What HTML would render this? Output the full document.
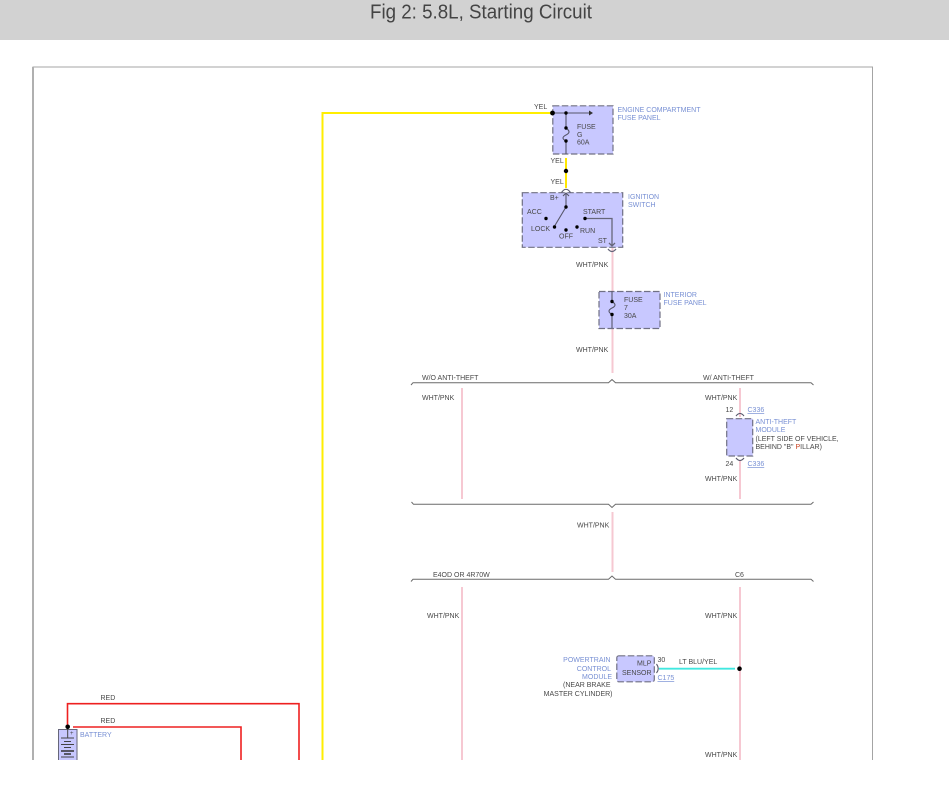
<!DOCTYPE html>
<html><head><meta charset="utf-8"><style>
html,body{margin:0;padding:0;background:#fff;width:949px;height:790px;overflow:hidden}
svg{display:block}
text{font-family:"Liberation Sans",Arial,sans-serif;font-size:7px;fill:#484848}
.b{fill:#7890d4}
.box{fill:#c8c8ff;stroke:#707084;stroke-width:1.2;stroke-dasharray:6.5 2.5}
.w{fill:none;stroke:#56566a;stroke-width:1.1}
.br{fill:none;stroke:#6a6a6a;stroke-width:1}
.p{stroke:#f6c8d2;stroke-width:2;fill:none}
.y{stroke:#ffe800;stroke-width:2;fill:none}
.r{stroke:#ee2020;stroke-width:1.6;fill:none}
</style></head><body>
<svg width="949" height="790" viewBox="0 0 949 790" xmlns="http://www.w3.org/2000/svg">
<rect width="949" height="40" fill="#d2d2d2"/>
<text x="370" y="18.500" style="font-size:20px;fill:#444" textLength="222" lengthAdjust="spacingAndGlyphs">Fig 2: 5.8L, Starting Circuit</text>
<path d="M33 760V67H872.500V760" fill="none" stroke="#a4a4a4" stroke-width="1"/>
<path d="M33 67V760" fill="none" stroke="#b0b0b0" stroke-width="2"/>

<!-- wires -->
<path d="M322.500 760V113H552" stroke="#ffee00" stroke-width="2" fill="none"/>
<path class="y" d="M566 158V170M566 172V188"/>
<path class="p" d="M612.500 248V291M612.500 328V373M612.500 512V572M462 388V499M740 388V417M740 460V499M462 587V760M740 587V760"/>
<path class="r" d="M67.500 725V703.700H299V760M73 727H241V760"/>
<path d="M659 668.700H735" stroke="#40e8e0" stroke-width="1.800" fill="none"/>

<!-- brackets -->
<path class="br" d="M411 385L413 382.700H608.500L612 379.500L615.500 382.700H811L813.500 385"/>
<path class="br" d="M411.500 502L413.500 504.300H608.500L612 507.500L615.500 504.300H811L813.500 502"/>
<path class="br" d="M411 581.500L413 579.300H608.500L612 576L615.500 579.300H811L813.500 581.500"/>

<!-- fuse panel -->
<rect class="box" x="552.800" y="105.800" width="60.200" height="48.200"/>
<path class="w" d="M552 113H590M566 113V128C570 131 570 133 566 135C562 137 562 139 566 141V154"/>
<path d="M589 110.500L593 113L589 115.500Z" fill="#333"/>
<circle cx="552.500" cy="113" r="2.400" fill="#000"/><circle cx="566" cy="113" r="1.700" fill="#000"/><circle cx="566" cy="128" r="1.700" fill="#000"/><circle cx="566" cy="141" r="1.700" fill="#000"/><circle cx="566" cy="171" r="2.200" fill="#000"/>
<text x="534" y="109">YEL</text><text x="577" y="129">FUSE</text><text x="577" y="137">G</text><text x="577" y="144.500">60A</text>
<text class="b" x="617.500" y="112">ENGINE COMPARTMENT</text><text class="b" x="617.500" y="120">FUSE PANEL</text>
<text x="550.500" y="163">YEL</text><text x="550.500" y="184">YEL</text>

<!-- ignition -->
<rect class="box" x="522.300" y="192.700" width="100.400" height="54.600"/>
<path class="w" d="M561.500 192.500Q566 186 570.500 192.500M566 193V207L554 227M563 196L566 193L569 196"/>
<path d="M585 218.500H612V246M609 243L612 246L615 243M608 249Q612 254 616 249" fill="none" stroke="#66667a" stroke-width="1.300"/>
<circle cx="566" cy="207" r="1.700" fill="#000"/><circle cx="546" cy="218.500" r="1.700" fill="#000"/><circle cx="554.500" cy="227" r="1.700" fill="#000"/><circle cx="566" cy="230" r="1.700" fill="#000"/><circle cx="577" cy="227" r="1.700" fill="#000"/><circle cx="585" cy="218.500" r="1.700" fill="#000"/>
<text x="550" y="200">B+</text><text x="527" y="214">ACC</text><text x="583" y="214">START</text><text x="531" y="231">LOCK</text><text x="580" y="233">RUN</text><text x="559" y="238.500">OFF</text><text x="598" y="243">ST</text>
<text class="b" x="628" y="199">IGNITION</text><text class="b" x="628" y="207">SWITCH</text>
<text x="576" y="267">WHT/PNK</text>

<!-- fuse 7 -->
<rect class="box" x="599" y="291.500" width="61" height="37"/>
<path class="w" d="M612 291V301.500C616 304 616 306 612 308C608 310 608 312 612 314.500V328"/>
<circle cx="612" cy="301.500" r="1.700" fill="#000"/><circle cx="612" cy="314.500" r="1.700" fill="#000"/>
<text x="624" y="302">FUSE</text><text x="624" y="310">7</text><text x="624" y="318">30A</text>
<text class="b" x="663.500" y="297">INTERIOR</text><text class="b" x="663.500" y="305">FUSE PANEL</text>
<text x="576" y="352">WHT/PNK</text>

<text x="422" y="380">W/O ANTI-THEFT</text><text x="703" y="380">W/ ANTI-THEFT</text>
<text x="422" y="400">WHT/PNK</text><text x="705" y="400">WHT/PNK</text>

<!-- anti-theft -->
<rect class="box" x="726.700" y="418.700" width="26" height="37.300"/>
<path class="w" d="M736 416Q740 411 744 416M736 458Q740 463 744 458"/>
<text x="725.500" y="412">12</text><text x="725.500" y="466">24</text>
<text class="b" x="747.500" y="412" style="text-decoration:underline">C336</text><text class="b" x="747.500" y="466" style="text-decoration:underline">C336</text>
<text class="b" x="755.500" y="424">ANTI-THEFT</text><text class="b" x="755.500" y="432">MODULE</text>
<text x="755.500" y="441">(LEFT SIDE OF VEHICLE,</text><text x="755.500" y="449">BEHIND "B" <tspan fill="#c84020">P</tspan>ILLAR)</text>
<text x="705" y="481">WHT/PNK</text>

<text x="577" y="527.500">WHT/PNK</text>
<text x="433" y="577">E4OD OR 4R70W</text><text x="735" y="577">C6</text>
<text x="427" y="618">WHT/PNK</text><text x="705" y="618">WHT/PNK</text>

<!-- MLP -->
<rect class="box" x="616.800" y="655.800" width="37.500" height="26" rx="2"/>
<text x="637" y="665.500">MLP</text><text x="622" y="675">SENSOR</text>
<path class="w" d="M656.500 664Q660 668.700 656.500 673"/>
<text x="657.500" y="662">30</text><text x="657.500" y="680" class="b" style="text-decoration:underline">C175</text>
<text x="679" y="664">LT BLU/YEL</text>
<circle cx="739.500" cy="668.700" r="2.300" fill="#000"/>
<text class="b" x="610.500" y="662" text-anchor="end">POWERTRAIN</text><text class="b" x="611" y="671" text-anchor="end">CONTROL</text><text class="b" x="612" y="679" text-anchor="end">MODULE</text>
<text x="610.500" y="687" text-anchor="end">(NEAR BRAKE</text><text x="612.500" y="696" text-anchor="end">MASTER CYLINDER)</text>
<text x="705" y="757">WHT/PNK</text>

<!-- battery -->
<rect x="58.500" y="729.500" width="18.500" height="31" fill="#c8c8ff" stroke="#66667a" stroke-width="1"/>
<path d="M67.700 727V738" stroke="#444" stroke-width="1"/>
<path d="M61 738H74M64 741.500H71M61 744.500H74M64 747.500H71M61 751H74M64 754H71M61 757H74" stroke="#444" stroke-width="1"/>
<path d="M61 751H74M64 754H71" stroke="#333" stroke-width="1.500"/>
<text x="70" y="735" style="font-size:6px">+</text>
<circle cx="67.700" cy="726.800" r="2.300" fill="#000"/>
<text x="100.500" y="700">RED</text><text x="100.500" y="723">RED</text>
<text class="b" x="80" y="737">BATTERY</text>
<rect x="0" y="760" width="949" height="30" fill="#fff"/>
</svg>
</body></html>
